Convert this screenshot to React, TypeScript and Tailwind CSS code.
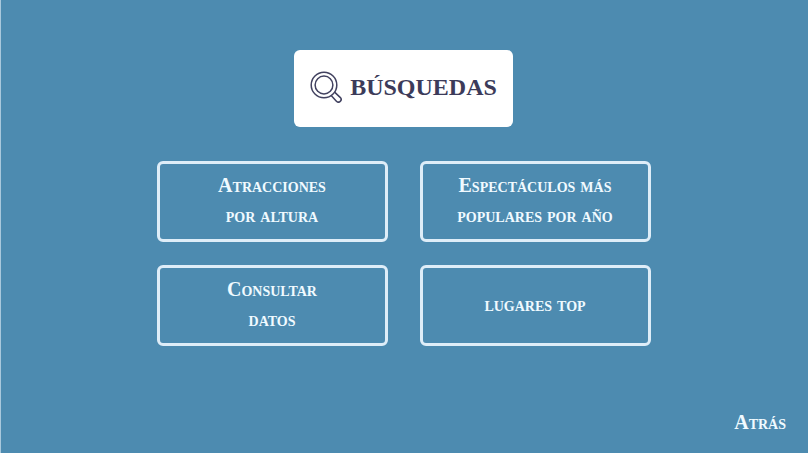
const options = [
  ["Atracciones", "por altura"],
  ["Espectáculos más", "populares por año"],
  ["Consultar", "datos"],
  ["lugares top"],
];

function SearchIcon() {
  return (
    <svg
      viewBox="0 0 32 32"
      className="h-8 w-8 shrink-0"
      fill="none"
      stroke="#41415f"
      strokeWidth="1.5"
      strokeLinejoin="round"
      aria-hidden="true"
    >
      <circle cx="14" cy="14" r="12.8" />
      <circle cx="14" cy="14" r="8.9" />
      <path d="M21.2 24.6 L26.4 30.2 A2.4 2.4 0 0 0 30.4 26.6 L24.6 21.1" />
    </svg>
  );
}

export default function App() {
  return (
    <main className="flex min-h-screen flex-col items-center border-l border-[#a9c8dc] bg-[#4d8bb0] pt-[50px] pr-[22px] pb-4 pl-5 font-['Liberation_Serif',serif]">
      <header className="flex h-[77px] items-center gap-2 rounded-md bg-white px-4 pb-1">
        <SearchIcon />
        <h1 className="text-[24px] leading-8 font-bold text-[#3c3b5a]">BÚSQUEDAS</h1>
      </header>
      <nav
        aria-label="Búsquedas"
        className="mt-[34px] grid w-full max-w-[494px] grid-cols-2 gap-x-8 gap-y-[23px]"
      >
        {options.map((lines) => (
          <button
            key={lines[0]}
            type="button"
            className="flex h-[81px] cursor-pointer flex-col items-center justify-center rounded-md border-3 border-[#deedf8] pb-[3px] text-[20px] leading-[30px] font-bold text-[#f0faff] [font-variant-caps:small-caps]"
          >
            {lines.map((line) => (
              <span key={line}>{line}</span>
            ))}
          </button>
        ))}
      </nav>
      <button
        type="button"
        className="mt-auto cursor-pointer self-end text-[20px] leading-[30px] font-bold text-[#f0faff] [font-variant-caps:small-caps]"
      >
        Atrás
      </button>
    </main>
  );
}
